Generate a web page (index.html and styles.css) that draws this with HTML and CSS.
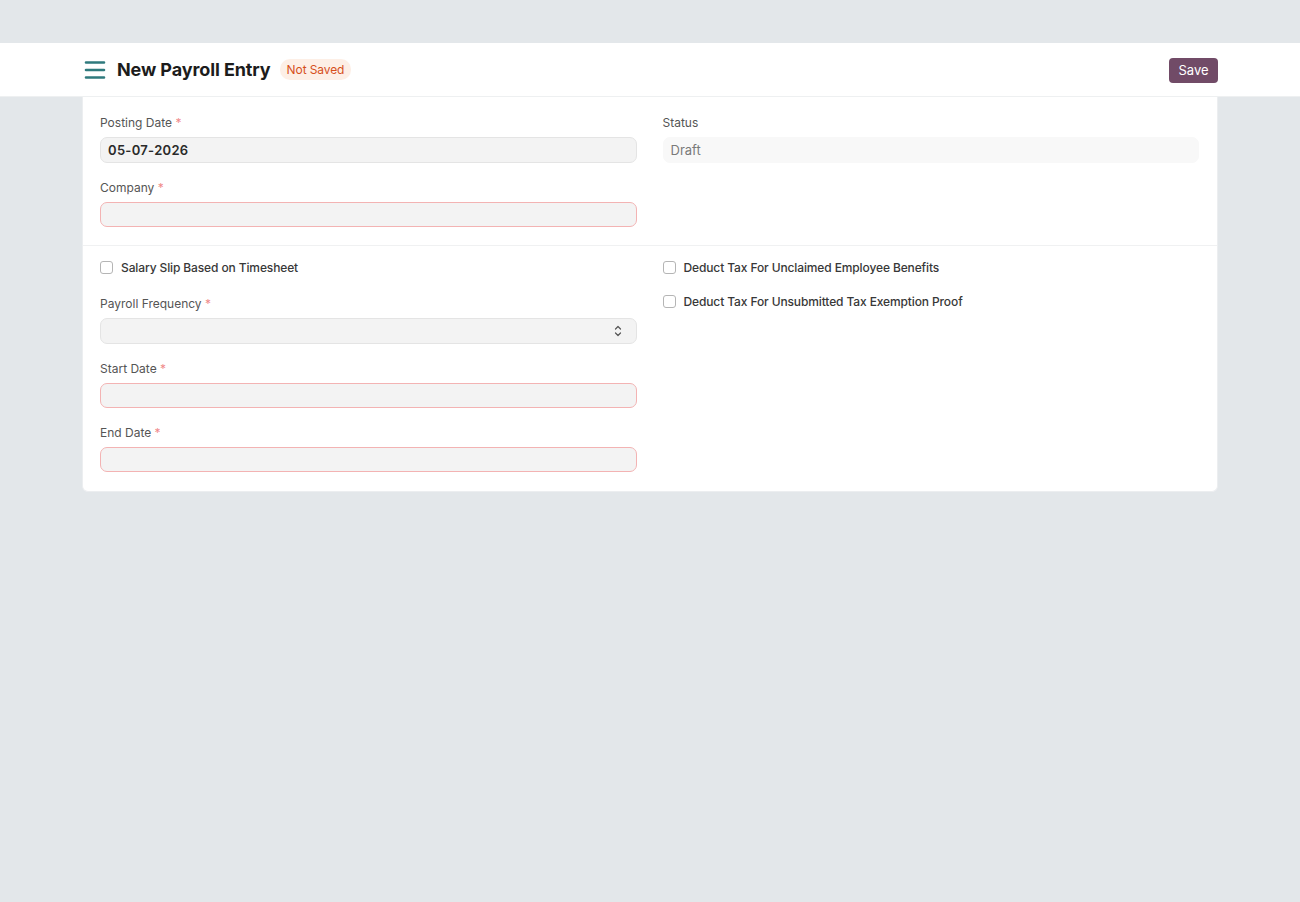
FILE: index.html
```html
<!DOCTYPE html>
<html lang="en">
  <head>
    <meta charset="UTF-8">
    <meta name="viewport" content="width=device-width, initial-scale=1.0">
    <title>New Payroll Entry</title>
    <link rel="stylesheet" href="styles.css">
  </head>
  <body>
    <div class="topgap"></div>
    <header class="page-head">
      <div class="container head-row">
        <div class="head-left">
          <svg class="menu-icon" width="22" height="22" viewBox="0 0 22 22">
            <path d="M2 3.5h18M2 11h18M2 18.5h18" stroke="#2f7a7d" stroke-width="2.6" stroke-linecap="round"/>
          </svg>
          <h1 class="title">New Payroll Entry</h1>
          <span class="badge">Not Saved</span>
        </div>
        <button class="btn-save">Save</button>
      </div>
    </header>

    <div class="container">
      <div class="card">
        <section class="section">
          <div class="col">
            <div class="field">
              <label class="label">Posting Date <span class="req">*</span></label>
              <div class="input filled">05-07-2026</div>
            </div>
            <div class="field">
              <label class="label">Company <span class="req">*</span></label>
              <div class="input invalid"></div>
            </div>
          </div>
          <div class="col">
            <div class="field">
              <label class="label">Status</label>
              <div class="input readonly">Draft</div>
            </div>
          </div>
        </section>

        <section class="section">
          <div class="col">
            <div class="check-row">
              <span class="checkbox"></span>
              <span class="check-label">Salary Slip Based on Timesheet</span>
            </div>
            <div class="field">
              <label class="label">Payroll Frequency <span class="req">*</span></label>
              <div class="input select">
                <svg width="8" height="14" viewBox="0 0 8 14">
                  <path d="M1.5 5L4 2.5 6.5 5M1.5 9L4 11.5 6.5 9" fill="none" stroke="#555" stroke-width="1.2" stroke-linecap="round" stroke-linejoin="round"/>
                </svg>
              </div>
            </div>
            <div class="field">
              <label class="label">Start Date <span class="req">*</span></label>
              <div class="input invalid"></div>
            </div>
            <div class="field">
              <label class="label">End Date <span class="req">*</span></label>
              <div class="input invalid"></div>
            </div>
          </div>
          <div class="col">
            <div class="check-row">
              <span class="checkbox"></span>
              <span class="check-label">Deduct Tax For Unclaimed Employee Benefits</span>
            </div>
            <div class="check-row">
              <span class="checkbox"></span>
              <span class="check-label">Deduct Tax For Unsubmitted Tax Exemption Proof</span>
            </div>
          </div>
        </section>
      </div>
    </div>
  </body>
</html>
```

FILE: styles.css
```css
html {
  font-family: Inter, "Noto Sans", sans-serif;
}

body {
  margin: 0;
  background-color: #e3e7ea;
  color: #1f1f1f;
}

.topgap {
  height: 43px;
}

.container {
  width: 1136px;
  margin: 0 auto;
}

.page-head {
  background-color: #fff;
  height: 54px;
  border-bottom: 1px solid #eef0f1;
  box-sizing: border-box;
}

.head-row {
  display: flex;
  align-items: center;
  justify-content: space-between;
  height: 100%;
}

.head-left {
  display: flex;
  align-items: center;
}

.menu-icon {
  margin-left: 2px;
  margin-right: 11px;
}

.title {
  font-size: 18px;
  font-weight: 700;
  margin: 0;
  color: #1c1c1c;
  letter-spacing: -0.1px;
}

.badge {
  margin-left: 9px;
  background-color: #fdefe6;
  color: #d6501c;
  font-size: 12px;
  padding: 3px 7px;
  border-radius: 10px;
  letter-spacing: -0.1px;
}

.btn-save {
  background-color: #714b67;
  color: #fff;
  border: none;
  border-radius: 4px;
  font-family: inherit;
  font-size: 13px;
  height: 25px;
  width: 49px;
  padding: 0;
  margin-top: 1px;
}

.card {
  background-color: #fff;
  border: 1px solid #eceef0;
  border-top: none;
  border-radius: 0 0 6px 6px;
}

.section {
  display: flex;
  gap: 26px;
  padding: 18px 18px 1px 17px;
  border-bottom: 1px solid #f0f1f2;
}

.section:last-child {
  border-bottom: none;
  padding-top: 14px;
  padding-bottom: 2px;
}

.col {
  flex: 1;
}

.field {
  margin-bottom: 17px;
}

.label {
  display: block;
  font-size: 12px;
  color: #555;
  margin-bottom: 6px;
  line-height: 16px;
}

.req {
  color: #f08a8a;
}

.input {
  box-sizing: border-box;
  height: 26px;
  border-radius: 7px;
  background-color: #f3f3f3;
  border: 1px solid #e4e4e4;
  font-size: 13px;
  line-height: 24px;
  padding: 0 7px;
}

.input.filled {
  font-weight: 600;
  color: #2a2a2a;
  letter-spacing: 0.3px;
}

.input.invalid {
  border-color: #f3b3b3;
  height: 25px;
}

.input.readonly {
  background-color: #f8f8f8;
  border-color: #f8f8f8;
  color: #7a7a7a;
}

.input.select {
  display: flex;
  align-items: center;
  justify-content: flex-end;
  padding-right: 14px;
}

.check-row {
  display: flex;
  align-items: center;
  height: 14px;
  margin-bottom: 22px;
}

.col .check-row + .check-row {
  margin-top: -2px;
}

.checkbox {
  width: 11px;
  height: 11px;
  border: 1px solid #b5b5b5;
  border-radius: 3px;
  margin-right: 8px;
}

.check-label {
  font-size: 12px;
  font-weight: 500;
  color: #383838;
  letter-spacing: -0.12px;
}
```
